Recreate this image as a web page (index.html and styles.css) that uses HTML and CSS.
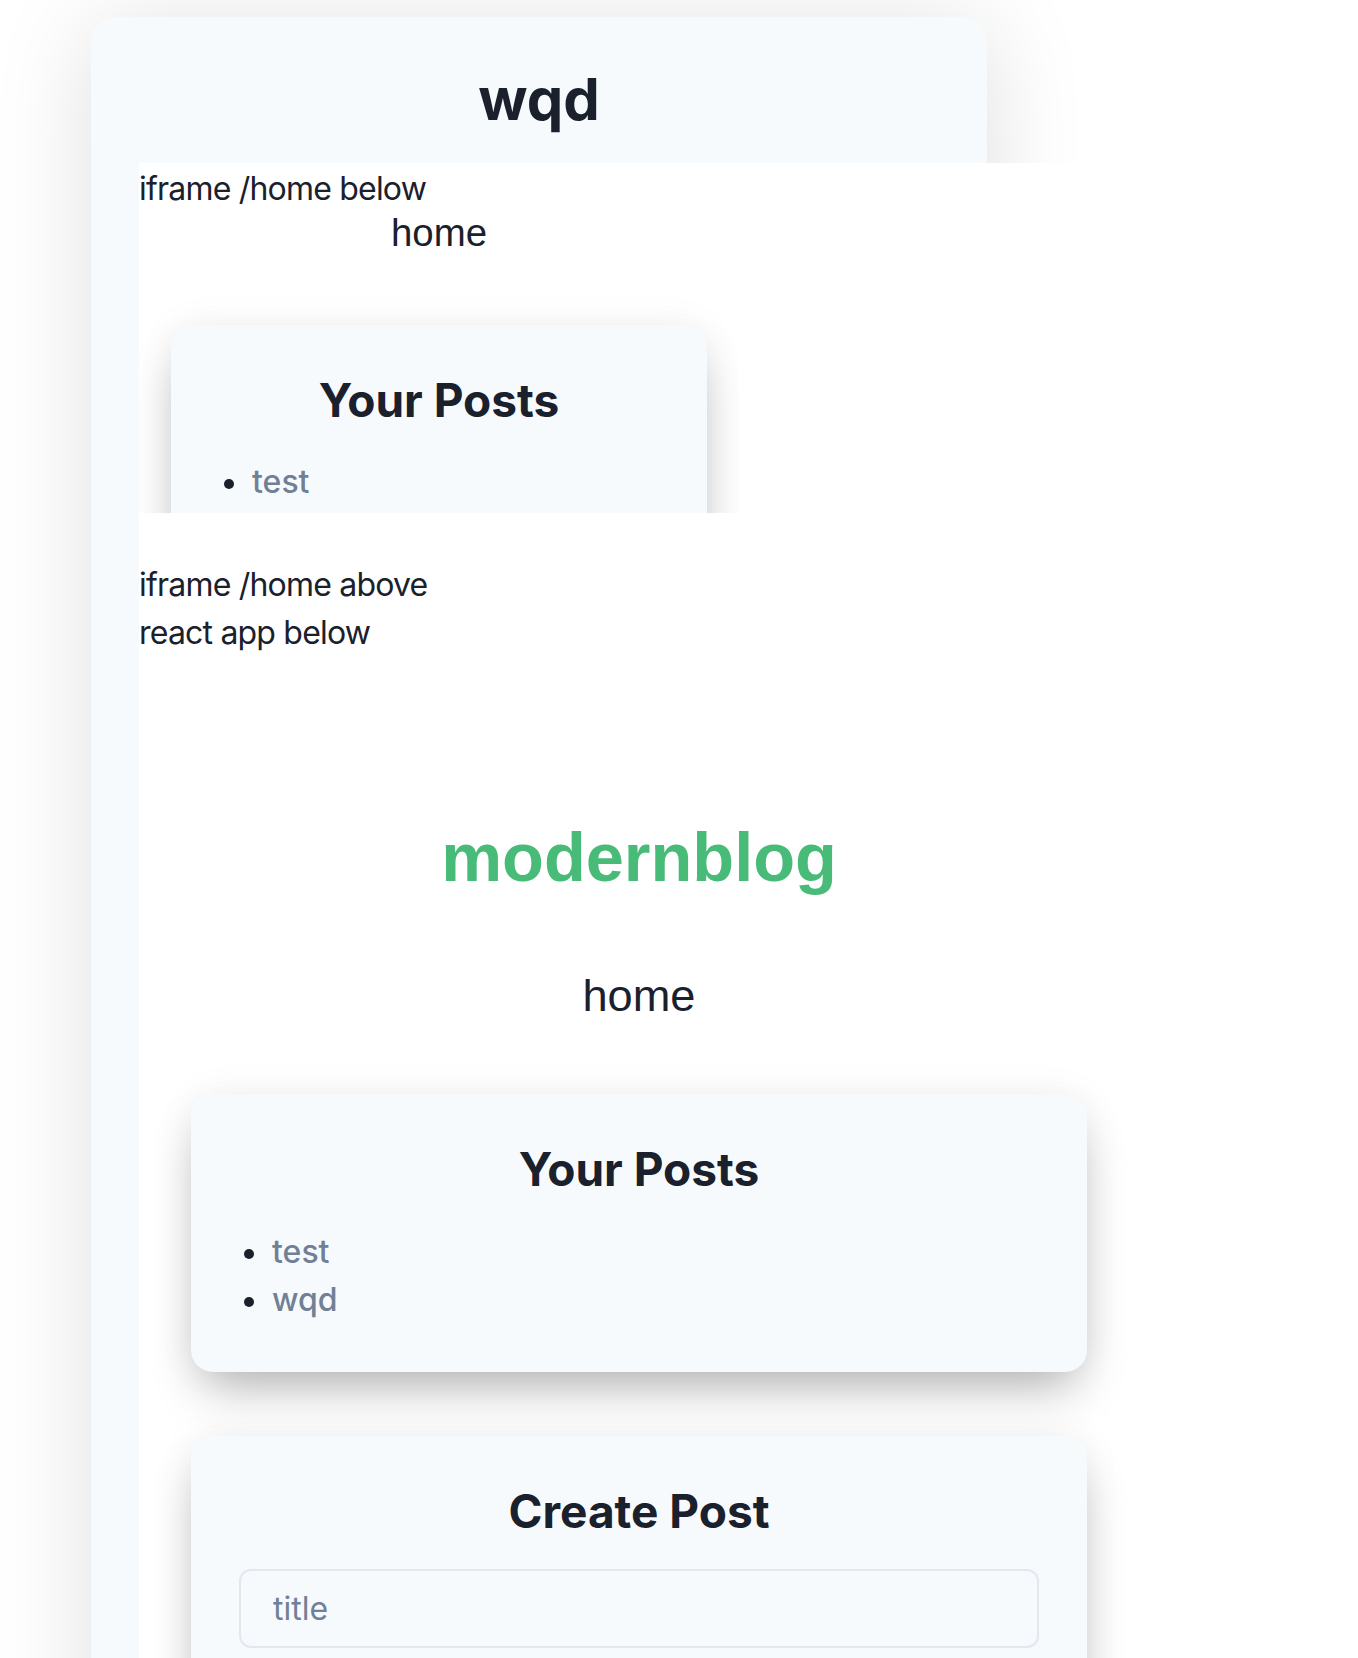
FILE: index.html
```html
<!DOCTYPE html>
<html>
<head>
<meta charset="utf-8">
<title>wqd</title>
<link rel="stylesheet" href="styles.css">
</head>
<body>
<div class="outer">
  <h1 class="outer-title">wqd</h1>
  <div class="sheet">
    <div class="line">iframe /home below</div>
    <div class="iframe">
      <div class="nav-link small">home</div>
      <div class="card card-in-frame">
        <h2 class="card-title">Your Posts</h2>
        <ul class="posts">
          <li><a class="post-link">test</a></li>
          <li><a class="post-link">wqd</a></li>
        </ul>
      </div>
    </div>
    <div class="line after-frame">iframe /home above</div>
    <div class="line">react app below</div>
    <div class="app">
      <div class="brand">modernblog</div>
      <div class="nav-link big">home</div>
      <div class="card">
        <h2 class="card-title">Your Posts</h2>
        <ul class="posts">
          <li><a class="post-link">test</a></li>
          <li><a class="post-link">wqd</a></li>
        </ul>
      </div>
      <div class="card create">
        <h2 class="card-title">Create Post</h2>
        <input class="field" type="text" placeholder="title">
        <textarea class="field area" placeholder="content"></textarea>
      </div>
    </div>
  </div>
</div>
</body>
</html>
```

FILE: styles.css
```css
* { box-sizing: border-box; }

html, body {
  margin: 0;
  padding: 0;
  background: #ffffff;
}

body {
  font-family: Inter, "Noto Sans", sans-serif;
  font-size: 32px;
  line-height: 1.5;
  color: #1a202c;
}

.outer {
  width: 896px;
  margin: 17px 0 0 91px;
  padding: 48px 48px 0;
  background: #f7fafc;
  border-radius: 24px;
  box-shadow: 0 10px 100px rgba(0, 0, 0, 0.13);
}

.outer-title {
  margin: 0 0 28px;
  font-size: 58px;
  line-height: 1.2;
  font-weight: 700;
  text-align: center;
}

.sheet {
  width: 1000px;
  background: #ffffff;
  padding-bottom: 200px;
}

.line {
  height: 48px;
  line-height: 52px;
  white-space: nowrap;
  letter-spacing: -0.8px;
}

.after-frame { margin-top: 46px; }

.iframe {
  width: 600px;
  height: 302px;
  overflow: hidden;
  background: #ffffff;
}

.nav-link {
  font-family: "Liberation Sans", Arial, sans-serif;
  line-height: 1.15;
  text-align: center;
  color: #1a202c;
}

.nav-link.small { font-size: 38.4px; }
.nav-link.big { font-size: 45.2px; margin-top: 73px; }

.brand {
  margin-top: 164px;
  font-family: "Liberation Sans", Arial, sans-serif;
  font-weight: 700;
  font-size: 68.5px;
  line-height: 1.15;
  color: #48bb78;
  text-align: center;
}

.card {
  width: 896px;
  margin: 72px auto 0;
  padding: 48px;
  background: #f7fafc;
  border-radius: 22px;
  box-shadow: 0 25px 50px -12px rgba(0, 0, 0, 0.3), 0 0 40px rgba(0, 0, 0, 0.05);
}

.card-in-frame {
  width: 536px;
  margin: 70px 32px 0;
}

.card-title {
  margin: 0;
  font-size: 46px;
  line-height: 1.2;
  font-weight: 700;
  text-align: center;
}

.posts {
  list-style: none;
  margin: 30px 0 0;
  padding: 0;
}

.posts li {
  position: relative;
  padding-left: 33px;
  height: 48px;
}

.posts li::before {
  content: "";
  position: absolute;
  left: 5px;
  top: 21px;
  width: 10px;
  height: 10px;
  border-radius: 50%;
  background: #1a202c;
}

.post-link {
  color: #718096;
  font-weight: 500;
  text-decoration: none;
}

.create {
  margin-top: 64px;
}

.field {
  display: block;
  width: 100%;
  height: 79px;
  margin-top: 30px;
  padding: 0 32px;
  border: 2px solid #e2e8f0;
  border-radius: 12px;
  background: #f7fafc;
  font-family: Inter, "Noto Sans", sans-serif;
  font-size: 32px;
  color: #1a202c;
  outline: none;
}

.field::placeholder { color: #718096; }

.area {
  height: 200px;
  padding-top: 16px;
  resize: none;
}
```
